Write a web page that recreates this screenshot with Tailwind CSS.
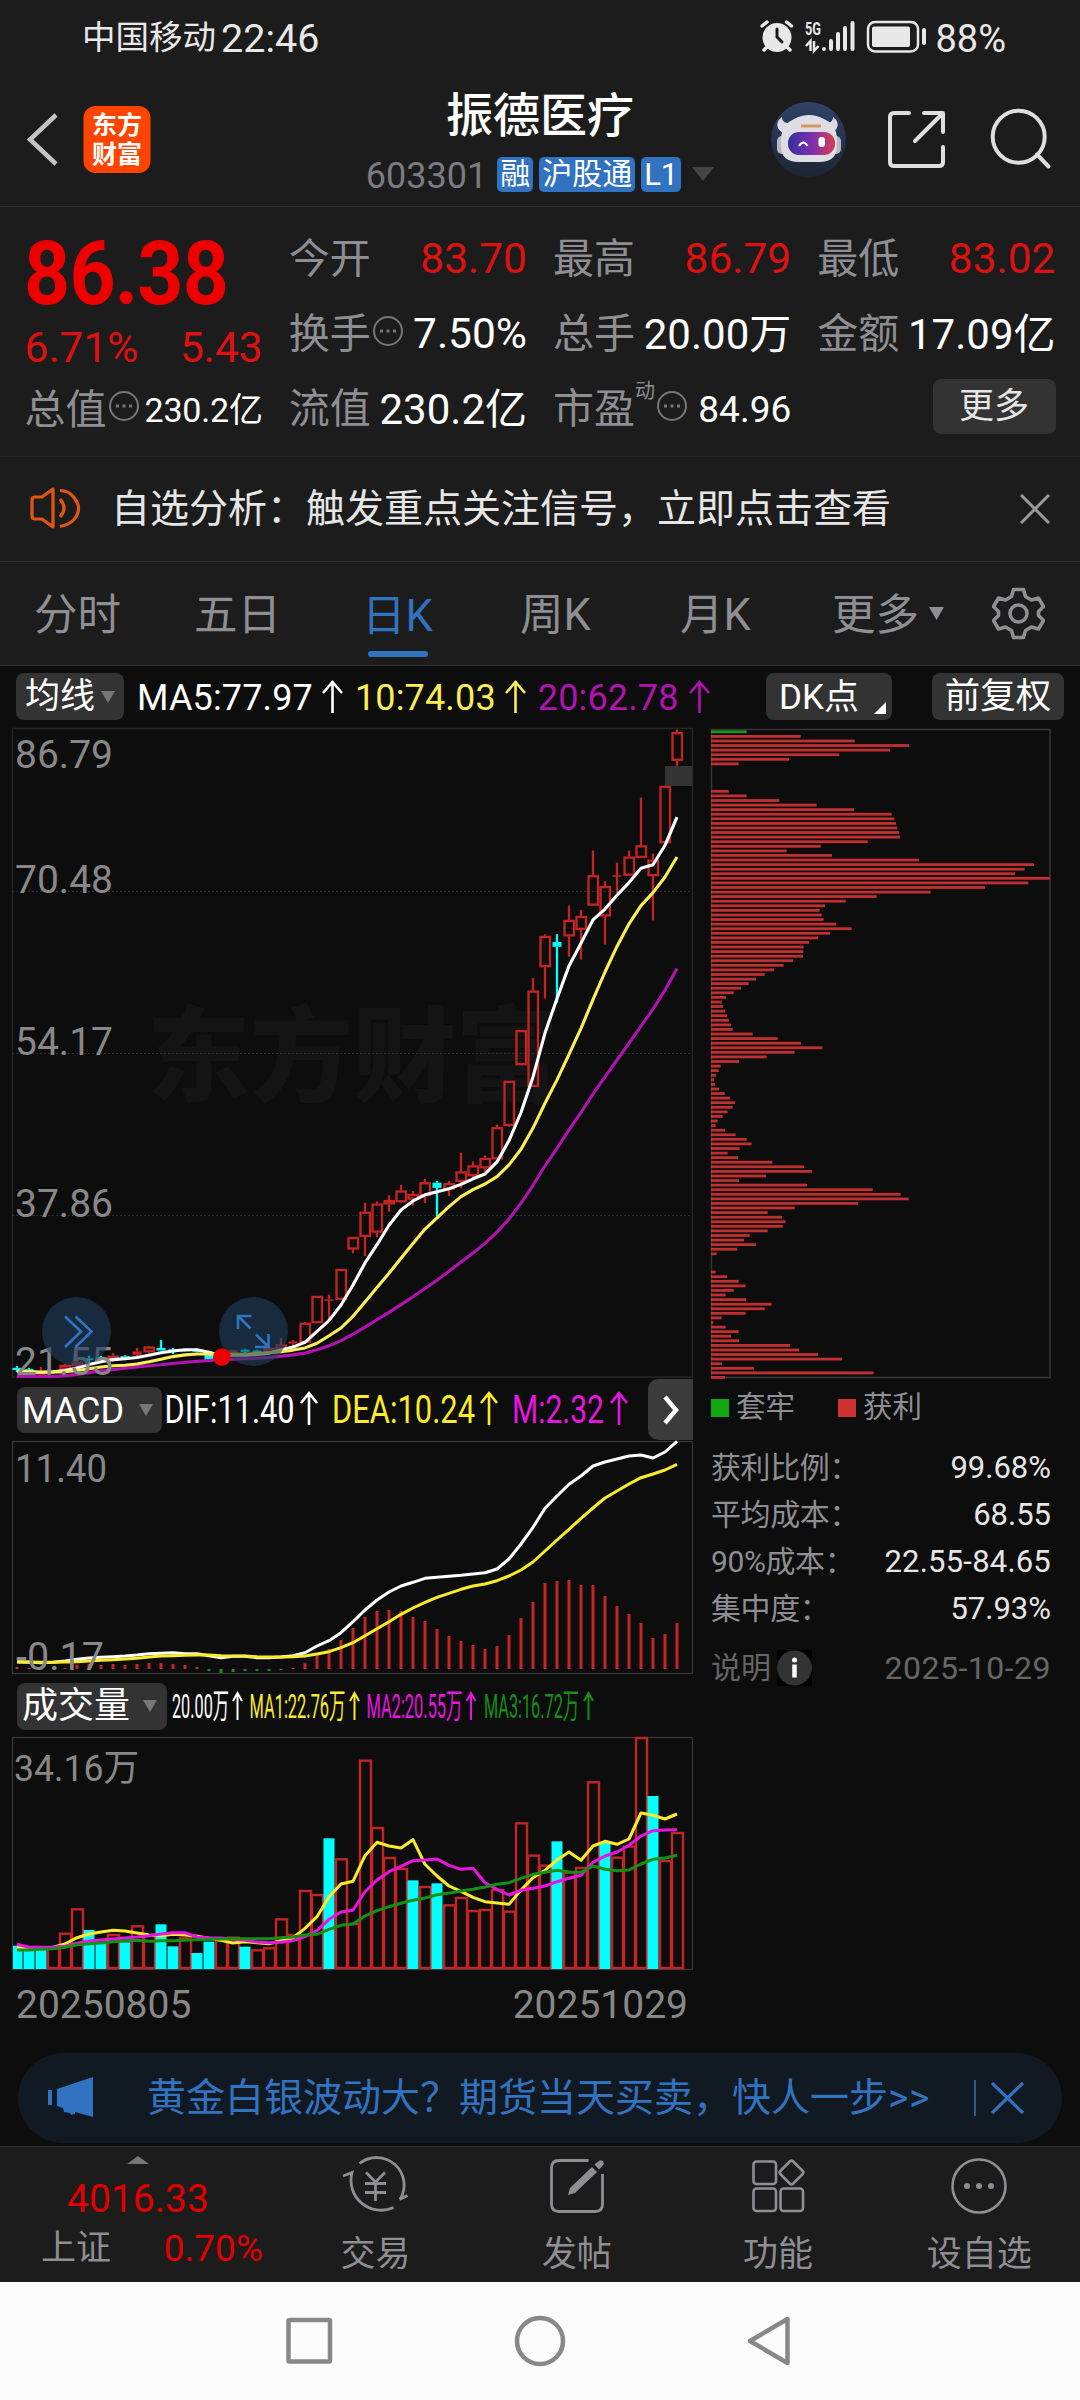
<!DOCTYPE html>
<html lang="zh-CN">
<head>
    <meta charset="UTF-8">
    <meta name="viewport" content="width=device-width, initial-scale=1.0">
    <title>振德医疗 603301</title>
    <script src="https://cdn.jsdelivr.net/npm/@tailwindcss/browser@4"></script>
</head>
<body class="w-[1080px] h-[2400px] overflow-hidden flex flex-col bg-[#0d0d0d] text-white font-[Roboto,'Noto_Sans_CJK_SC',sans-serif] whitespace-nowrap">

    <!-- Status bar -->
    <div class="h-[76px] shrink-0 bg-[#1c1c1c] flex items-center pl-[82px] pr-[74px] text-[#e8e8e8]">
        <span class="text-[33.5px] leading-none">中国移动</span>
        <span class="text-[39.5px] leading-none ml-[5px] mt-[2px]">22:46</span>
        <svg class="ml-auto" width="172" height="40" viewBox="759 18 172 40" fill="#e8e8e8">
            <circle cx="777" cy="37.5" r="14.5"/>
            <path d="M762 26l5-4M791.500 26l-5-4M768 46l-4 4M786 46l4 4" stroke="#e8e8e8" stroke-width="3.500" stroke-linecap="round"/>
            <path d="M777 29v8l5 5" stroke="#1c1c1c" stroke-width="3" fill="none" stroke-linecap="round"/>
            <text x="805" y="34.500" font-size="18" font-weight="700" textLength="16" lengthAdjust="spacingAndGlyphs">5G</text>
            <path d="M810.500 51V41l-4.500 5M814 41v10l4.500-5" stroke="#e8e8e8" stroke-width="2.500" fill="none"/>
            <path d="M824 49v0M831 41v8M838 34v15M845 28v21M852.500 23v26" stroke="#e8e8e8" stroke-width="4" stroke-linecap="round"/>
            <rect x="868" y="22" width="50" height="29.500" rx="7" fill="none" stroke="#e8e8e8" stroke-width="2.500"/>
            <rect x="872" y="26.500" width="38" height="20.500" rx="2"/>
            <path d="M924 30v13" stroke="#e8e8e8" stroke-width="4" stroke-linecap="round"/>
        </svg>
        <span class="text-[38px] leading-none ml-[4px] mt-[2px]">88%</span>
    </div>

    <!-- Title bar -->
    <div class="h-[131px] shrink-0 bg-[#1c1c1c] border-b border-[#333] flex">
        <svg class="shrink-0" width="320" height="130" viewBox="0 76 320 130">
            <path d="M56 115L30 139.500L56 164" fill="none" stroke="#c4c4c4" stroke-width="4.500"/>
            <rect x="83.500" y="106" width="67" height="67" rx="12" fill="#ff4400"/>
            <g fill="#fff" font-weight="700" font-size="25">
                <text x="92" y="134" textLength="50">东方</text>
                <text x="92" y="163" textLength="50">财富</text>
            </g>
        </svg>
        <div class="w-[440px] shrink-0 flex flex-col items-center">
            <div class="mt-[14px] h-[52px] text-[47px] leading-[52px] font-medium">振德医疗</div>
            <div class="mt-[14px] h-[36px] flex items-center">
                <span class="text-[36px] leading-[36px] text-[#7b7b80] mr-[10px] pt-[3px]">603301</span>
                <span class="h-[35px] w-[36px] rounded-[5px] bg-[#3173c0] text-[30px] leading-[33px] text-center mr-[6px]">融</span>
                <span class="h-[35px] w-[96px] rounded-[5px] bg-[#3173c0] text-[30px] leading-[33px] text-center mr-[6px]">沪股通</span>
                <span class="h-[35px] w-[40px] rounded-[5px] bg-[#3173c0] text-[31px] leading-[36px] text-center mr-[11px]">L1</span>
                <svg width="22" height="14"><path d="M0 0h22l-11 14z" fill="#444"/></svg>
            </div>
        </div>
        <svg class="shrink-0" width="320" height="130" viewBox="760 76 320 130">
            <defs>
                <linearGradient id="avatar" x1="0" y1="0" x2="0" y2="1"><stop offset="0" stop-color="#2f4268"/><stop offset="1" stop-color="#1d2534"/></linearGradient>
                <linearGradient id="visor"><stop offset="0" stop-color="#36309a"/><stop offset=".5" stop-color="#7a30b0"/><stop offset="1" stop-color="#d83c50"/></linearGradient>
            </defs>
            <circle cx="808.500" cy="139.500" r="37.500" fill="url(#avatar)"/>
            <path d="M782 117c-6 4-7 11 1 16l9-10c-7 1-10-2-10-6zM833 117c6 4 7 11-1 16l-9-10c7 1 10-2 10-6z" fill="#dcdce4"/>
            <rect x="777" y="136" width="10" height="18" rx="5" fill="#b9b9c6"/>
            <rect x="831" y="136" width="10" height="18" rx="5" fill="#b9b9c6"/>
            <path d="M794 119q15-8 30 0q12 5 13 19v8q0 16-18 16h-20q-18 0-18-16v-8q1-14 13-19z" fill="#dedde4"/>
            <path d="M801 126h20" stroke="#d7975f" stroke-width="3"/>
            <rect x="788" y="132" width="47" height="23" rx="11" fill="url(#visor)"/>
            <path d="M799 146q4.500-7 8.500 0" fill="none" stroke="#fff" stroke-width="2"/>
            <rect x="818.500" y="137" width="6.500" height="10" rx="3" fill="#fff"/>
            <g fill="none" stroke="#dedede" stroke-width="4" stroke-linecap="round" stroke-linejoin="round">
                <path d="M909 113h-15q-4 0-4 4v45q0 4 4 4h45q4 0 4-4v-15"/>
                <path d="M924 113h19v19M942 114L915 141"/>
                <circle cx="1018.700" cy="136.700" r="26"/>
                <path d="M1037 154.500l11.500 12"/>
            </g>
        </svg>
    </div>

    <!-- Quote summary -->
    <div class="h-[250px] shrink-0 bg-[#1c1c1c] border-b border-[#2b2b2b] px-[24.5px] grid grid-cols-4 gap-x-[26px] text-[42.5px] leading-none">
        <div class="flex flex-col">
            <div class="mt-[24px] h-[85px] text-[89px] leading-[85px] font-bold text-[#ee0000] origin-left scale-x-[0.905] tracking-[-0.01em] -ml-[1px]">86.38</div>
            <div class="h-[64px] flex items-center justify-between text-[#dd1111]"><span>6.71%</span><span>5.43</span></div>
            <div class="h-[60px] flex items-center text-[#8e8e93]">
                <span class="text-[41px]">总值</span>
                <svg class="ml-[1px] mb-[8px] shrink-0" width="32" height="32"><circle cx="16" cy="16" r="14" fill="none" stroke="#77777a" stroke-width="2"/><path d="M8 16h3M14.500 16h3M21 16h3" stroke="#77777a" stroke-width="3"/></svg>
                <span class="ml-auto text-[34px] tracking-[-0.2px] text-white">230.2亿</span>
            </div>
        </div>
        <div class="flex flex-col pt-[15px] text-[#8e8e93]">
            <div class="h-[75px] flex items-center justify-between"><span class="text-[41px]">今开</span><span class="text-[#dd1111]">83.70</span></div>
            <div class="h-[75px] flex items-center">
                <span class="text-[41px]">换手</span>
                <svg class="ml-[1px] mb-[8px] shrink-0" width="32" height="32"><circle cx="16" cy="16" r="14" fill="none" stroke="#77777a" stroke-width="2"/><path d="M8 16h3M14.500 16h3M21 16h3" stroke="#77777a" stroke-width="3"/></svg>
                <span class="ml-auto text-white">7.50%</span>
            </div>
            <div class="h-[75px] flex items-center justify-between"><span class="text-[41px]">流值</span><span class="text-[42px] text-white">230.2亿</span></div>
        </div>
        <div class="flex flex-col pt-[15px] text-[#8e8e93]">
            <div class="h-[75px] flex items-center justify-between"><span class="text-[41px]">最高</span><span class="text-[#dd1111]">86.79</span></div>
            <div class="h-[75px] flex items-center justify-between"><span class="text-[41px]">总手</span><span class="text-[42px] text-white">20.00万</span></div>
            <div class="h-[75px] flex items-center">
                <span class="text-[41px]">市盈</span>
                <span class="text-[20px] mb-[38px]">动</span>
                <svg class="ml-[1px] mb-[8px] shrink-0" width="32" height="32"><circle cx="16" cy="16" r="14" fill="none" stroke="#77777a" stroke-width="2"/><path d="M8 16h3M14.500 16h3M21 16h3" stroke="#77777a" stroke-width="3"/></svg>
                <span class="ml-auto text-[37px] text-white">84.96</span>
            </div>
        </div>
        <div class="flex flex-col pt-[15px] text-[#8e8e93]">
            <div class="h-[75px] flex items-center justify-between"><span class="text-[41px]">最低</span><span class="text-[#dd1111]">83.02</span></div>
            <div class="h-[75px] flex items-center justify-between"><span class="text-[41px]">金额</span><span class="text-[42px] text-white">17.09亿</span></div>
            <div class="h-[68px] flex items-center justify-end"><span class="w-[123px] h-[55px] rounded-lg bg-[#333] text-[#e6e6e6] text-[35px] leading-[55px] text-center">更多</span></div>
        </div>
    </div>

    <!-- Notice -->
    <div class="h-[105px] shrink-0 bg-[#1c1c1c] border-b border-[#333] flex items-center pl-[30px] pr-[30px]">
        <svg width="52" height="46" viewBox="30 486 52 46" fill="none" stroke="#e2570f" stroke-width="3.200" stroke-linejoin="round">
            <path d="M53 489v38l-11-8h-7q-3 0-3-3v-16q0-3 3-3h7z"/>
            <path d="M60 499q8 9 0 18M60 490.500q9 0 14 7t4.500 11q0 6-4.500 11t-14 7"/>
        </svg>
        <span class="ml-[29px] text-[39px] leading-none text-[#e6e6e6]">自选分析：触发重点关注信号，立即点击查看</span>
        <svg class="ml-auto" width="30" height="30" stroke="#999" stroke-width="3"><path d="M1 1l28 28M29 1L1 29"/></svg>
    </div>

    <!-- Period tabs -->
    <div class="h-[104px] shrink-0 bg-[#1c1c1c] border-b border-[#333] flex items-center pl-[34px] text-[43.5px] leading-none text-[#8e8e93]">
        <div class="w-[160px] pt-[5px]">分时</div>
        <div class="w-[168px] pt-[5px]">五日</div>
        <div class="w-[158px] h-full flex flex-col text-[#3173c0]">
            <span class="mt-[33px] h-[43px]">日K</span>
            <span class="mt-[13px] ml-[6px] w-[60px] h-[6px] rounded-full bg-[#3173c0]"></span>
        </div>
        <div class="w-[160px] pt-[5px]">周K</div>
        <div class="w-[152px] pt-[5px]">月K</div>
        <div class="pt-[5px]">更多</div>
        <svg class="ml-[10px]" width="16" height="14"><path d="M0 0h15l-7.500 13z" fill="#8e8e93"/></svg>
        <svg class="ml-auto mr-[35px]" width="53" height="53" viewBox="-26.500 -26.500 53 53" fill="none" stroke="#8e8e93" stroke-width="3.600" stroke-linejoin="round">
            <path d="M-5 -24h10l2 7l6 3.500l7-2l5 8.500l-5 5v4l5 5l-5 8.500l-7-2l-6 3.500l-2 7h-10l-2-7l-6-3.500l-7 2l-5-8.500l5-5v-4l-5-5l5-8.500l7 2l6-3.500z"/>
            <circle r="8.500"/>
        </svg>
    </div>

    <!-- Moving average toolbar -->
    <div class="h-[58px] shrink-0 flex items-center pl-4 pr-4 pt-[3px] text-[36px] leading-none">
        <div class="w-[108px] h-[47px] rounded-lg bg-[#333] flex items-center pl-[9px] text-[35px]">均线<svg class="ml-[6px]" width="14" height="12"><path d="M0 0h14l-7 12z" fill="#777"/></svg></div>
        <span class="ml-[13px] pt-[3px] tracking-[0.15px]">MA5:77.97</span>
        <svg class="ml-[9px]" width="21" height="33" fill="none" stroke="#fff" stroke-width="2.600"><path d="M10.500 33V2M1 13l9.500-11L20 13"/></svg>
        <span class="ml-[12px] pt-[3px] tracking-[0.15px] text-[#fdee55]">10:74.03</span>
        <svg class="ml-[9px]" width="21" height="33" fill="none" stroke="#fdee55" stroke-width="2.600"><path d="M10.500 33V2M1 13l9.500-11L20 13"/></svg>
        <span class="ml-[12px] pt-[3px] tracking-[0.15px] text-[#b112b1]">20:62.78</span>
        <svg class="ml-[10px]" width="21" height="33" fill="none" stroke="#b112b1" stroke-width="2.600"><path d="M10.500 33V2M1 13l9.500-11L20 13"/></svg>
        <div class="ml-auto w-[126px] h-[47px] rounded-lg bg-[#333] flex items-center pl-[13px] text-[35px] mr-[40px]"><span class="pt-[2px]">DK点</span><svg class="ml-auto mr-[6px] mt-[22px]" width="12" height="12"><path d="M12 0v12H0z" fill="#fff"/></svg></div>
        <div class="w-[132px] h-[47px] rounded-lg bg-[#333] text-[35.500px] leading-[47px] text-center">前复权</div>
    </div>

    <div class="h-[1316px] shrink-0 flex">
        <!-- Left: price, MACD, volume -->
        <div class="w-[700px] shrink-0 flex flex-col">
            <svg id="price" class="block shrink-0" width="700" height="655" viewBox="0 724 700 655"></svg>

            <div class="h-[61px] shrink-0 flex items-center pl-[17px] pr-[7px]">
                <div class="w-[145px] h-[46px] rounded-lg bg-[#333] flex items-center pl-[5px] text-[36px] leading-none"><span class="pt-[2px]">MACD</span><svg class="ml-auto mr-[9px]" width="14" height="12"><path d="M0 0h14l-7 12z" fill="#777"/></svg></div>
                <svg width="486" height="61" viewBox="162 1379 486 61" font-size="39" fill="none" stroke-width="2.600">
                    <text x="164.500" y="1423" textLength="130" lengthAdjust="spacingAndGlyphs" fill="#fff">DIF:11.40</text>
                    <path d="M309 1425v-32M301 1403l8-10l8 10" stroke="#fff"/>
                    <text x="332" y="1423" textLength="143" lengthAdjust="spacingAndGlyphs" fill="#fbec2b">DEA:10.24</text>
                    <path d="M489 1425v-32M481 1403l8-10l8 10" stroke="#fbec2b"/>
                    <text x="512" y="1423" textLength="92" lengthAdjust="spacingAndGlyphs" fill="#e815e0">M:2.32</text>
                    <path d="M619 1425v-32M611 1403l8-10l8 10" stroke="#e815e0"/>
                </svg>
                <div class="w-[45px] h-[61px] rounded-l-[10px] bg-[#3b3b3b] flex items-center justify-center">
                    <svg width="18" height="30" fill="none" stroke="#fff" stroke-width="4.500"><path d="M3 2l11 13L3 28"/></svg>
                </div>
            </div>

            <svg id="macd" class="block shrink-0" width="700" height="236" viewBox="0 1440 700 236"></svg>

            <div class="h-[60px] shrink-0 flex items-center pl-[17px]">
                <div class="w-[150px] h-[47px] rounded-lg bg-[#333] flex items-center pl-[5px] text-[36px] leading-none">成交量<svg class="ml-auto mr-[10px]" width="14" height="12"><path d="M0 0h14l-7 12z" fill="#777"/></svg></div>
                <svg width="440" height="60" viewBox="167 1676 440 60" font-size="34" fill="none" stroke-width="2">
                    <text x="172" y="1718" textLength="57" lengthAdjust="spacingAndGlyphs" fill="#fff">20.00万</text>
                    <path d="M237.500 1720v-27M233 1701l4.500-8l4.500 8" stroke="#fff"/>
                    <text x="249.500" y="1718" textLength="96" lengthAdjust="spacingAndGlyphs" fill="#fbec2b">MA1:22.76万</text>
                    <path d="M354.500 1720v-27M350 1701l4.500-8l4.500 8" stroke="#fbec2b"/>
                    <text x="366.500" y="1718" textLength="96" lengthAdjust="spacingAndGlyphs" fill="#e815e0">MA2:20.55万</text>
                    <path d="M471 1720v-27M466.500 1701l4.500-8l4.500 8" stroke="#e815e0"/>
                    <text x="484" y="1718" textLength="95" lengthAdjust="spacingAndGlyphs" fill="#159015">MA3:16.72万</text>
                    <path d="M588.500 1720v-27M584 1701l4.500-8l4.500 8" stroke="#159015"/>
                </svg>
            </div>

            <svg id="volume" class="block shrink-0" width="700" height="236" viewBox="0 1736 700 236"></svg>

            <div class="h-[64px] flex items-center justify-between pl-[16px] pr-[12px] pt-[3px] text-[39px] leading-none text-[#888]">
                <span>20250805</span>
                <span>20251029</span>
            </div>
        </div>

        <!-- Right: cost distribution -->
        <div class="w-[351px] flex flex-col pl-[11px] text-[30px] leading-none text-[#8e8e93]">
            <svg id="chips" class="block shrink-0 -ml-[11px]" width="360" height="655" viewBox="700 724 360 655"></svg>
            <div class="mt-[9px] h-[40px] flex items-center text-[29.500px]">
                <span class="w-[18px] h-[18px] bg-[#12a812] mr-[7px]"></span>套牢
                <span class="w-[18px] h-[18px] bg-[#cf3232] ml-[43px] mr-[7px]"></span>获利
            </div>
            <div class="mt-[16px] flex flex-col">
                <div class="h-[47px] flex items-center justify-between"><span class="tracking-[-0.4px]">获利比例：</span><span class="text-[31px] text-[#e6e6e6]">99.68%</span></div>
                <div class="h-[47px] flex items-center justify-between"><span class="tracking-[-0.4px]">平均成本：</span><span class="text-[31px] text-[#e6e6e6]">68.55</span></div>
                <div class="h-[47px] flex items-center justify-between"><span class="tracking-[-0.4px]">90%成本：</span><span class="text-[31px] tracking-[0.2px] text-[#e6e6e6]">22.55-84.65</span></div>
                <div class="h-[47px] flex items-center justify-between"><span class="tracking-[-0.4px]">集中度：</span><span class="text-[31px] text-[#e6e6e6]">57.93%</span></div>
            </div>
            <div class="mt-[12px] h-[47px] flex items-center text-[#666]">
                <span>说明</span>
                <svg class="ml-[6px] bg-black" width="35" height="36"><circle cx="17.500" cy="18" r="17.500" fill="#333"/><circle cx="17.500" cy="10" r="2.500" fill="#fff"/><path d="M17.500 14.500v13" stroke="#fff" stroke-width="4.500"/></svg>
                <span class="ml-auto text-[32px] tracking-[0.5px] pt-[1px]">2025-10-29</span>
            </div>
        </div>
    </div>

    <!-- Promo banner -->
    <div class="h-[106px] shrink-0 pt-[13px] px-[18px]">
        <div class="h-[90px] rounded-full bg-[#111a23] flex items-center pl-[29px] pr-[38px] text-[#3173c0]">
            <svg width="48" height="42" viewBox="47 2077 48 42" fill="#3173c0"><path d="M48 2090h4v15h-4zM57 2089l36-12v40l-18-5v2l-4 1l-1-2l-6-1l-1-4l-6-2z"/></svg>
            <span class="ml-[52px] text-[39px] leading-none">黄金白银波动大？期货当天买卖，快人一步<span class="tracking-[0.5px]">&gt;&gt;</span></span>
            <span class="ml-auto w-[2px] h-[36px] bg-[#2a5a92] mr-[15px]"></span>
            <svg width="33" height="32" stroke="#3173c0" stroke-width="3.200"><path d="M1 1l31 30M32 1L1 31"/></svg>
        </div>
    </div>

    <!-- Bottom bar -->
    <div class="h-[136px] shrink-0 bg-[#1c1c1c] border-t border-[#333] grid grid-cols-[275px_1fr_1fr_1fr_1fr] text-[35px] leading-none text-[#8e8e93]">
        <div class="flex flex-col items-center">
            <svg class="mt-[9px]" width="22" height="8"><path d="M0 8h22L11 0z" fill="#77777a"/></svg>
            <span class="mt-[16px] ml-[1px] h-[39px] text-[39px] text-[#e00000]">4016.33</span>
            <div class="mt-[11px] ml-[29px] w-[222px] flex items-center justify-between"><span>上证</span><span class="text-[37px] text-[#e00000]">0.70%</span></div>
        </div>
        <div class="flex flex-col items-center pt-[7px]">
            <svg width="70" height="64" viewBox="341 2154 70 64" fill="none" stroke="#8e8e93" stroke-width="2.800">
                <path d="M359.500 2163.500A27.500 27.500 0 0 1 400 2199.500M343 2176l9-3.500A30 30 0 0 0 393.500 2207.500M407.500 2195.500l-8 4"/>
                <path d="M366 2172.500l9.500 9.500l9.500-9.500M365 2183.500h21M365 2192.500h21M375.500 2182v19"/>
            </svg>
            <span class="mt-[19px]">交易</span>
        </div>
        <div class="flex flex-col items-center pt-[7px]">
            <svg width="64" height="64" viewBox="545 2154 64 64" fill="none" stroke="#8e8e93" stroke-width="2.800">
                <path d="M588.500 2160.500H559q-7.500 0-7.500 7.500v36q0 7.500 7.500 7.500h36q7.500 0 7.500-7.500v-30"/>
                <path d="M592 2167l5 5L575 2193l-7 2l2-7z" fill="#8e8e93" stroke="none"/>
                <path d="M594.500 2164.500l5-4q3-1 4 1.500t-1 4l-3.500 3.500z" fill="#8e8e93" stroke="none"/>
            </svg>
            <span class="mt-[19px]">发帖</span>
        </div>
        <div class="flex flex-col items-center pt-[7px]">
            <svg width="64" height="64" viewBox="746 2154 64 64" fill="none" stroke="#8e8e93" stroke-width="2.600">
                <rect x="753.500" y="2161.500" width="22.500" height="22.500" rx="3"/>
                <rect x="753.500" y="2188.500" width="22.500" height="22.500" rx="3"/>
                <rect x="780.500" y="2188.500" width="22.500" height="22.500" rx="3"/>
                <rect x="782.500" y="2163.500" width="18" height="18" rx="2.500" transform="rotate(45 791.500 2172.500)"/>
            </svg>
            <span class="mt-[19px]">功能</span>
        </div>
        <div class="flex flex-col items-center pt-[7px]">
            <svg width="64" height="64" viewBox="-32 -32 64 64" fill="none" stroke="#8e8e93" stroke-width="2.600">
                <circle r="26.500"/>
                <g fill="#8e8e93" stroke="none"><circle cx="-12" r="3"/><circle r="3"/><circle cx="12" r="3"/></g>
            </svg>
            <span class="mt-[19px]">设自选</span>
        </div>
    </div>

    <!-- System navigation -->
    <div class="h-[118px] shrink-0 bg-[#fcfcfc] flex justify-center">
        <svg width="1080" height="118" viewBox="0 2282 1080 118" fill="none" stroke="#888" stroke-width="4.500" stroke-linejoin="round">
            <rect x="288.500" y="2320" width="41.500" height="41.500" rx="1"/>
            <circle cx="540" cy="2341" r="23"/>
            <path d="M750 2341L787.500 2319V2363z"/>
        </svg>
    </div>

    <script>
        const RED = '#c42424';
        const CYAN = '#00ffff';
        const STEP = 12;
        const xAt = i => 17 + STEP * i;

        // chart rows are stored in sampled units and converted with an offset and a scale
        const priceY = v => 720 + v / 2.306;
        const macdY = v => 1370 + v / 3;
        const volY = v => 1670 + v / 3;

        const rect = (x, y, w, h, attrs) => `<rect x="${x}" y="${y}" width="${w}" height="${h}" ${attrs}/>`;
        const line = (x1, y1, x2, y2, attrs) => `<line x1="${x1}" y1="${y1}" x2="${x2}" y2="${y2}" ${attrs}/>`;
        const label = (x, y, w, text) => `<text x="${x}" y="${y}" textLength="${w}" lengthAdjust="spacingAndGlyphs" font-size="38" fill="#888">${text}</text>`;

        function polyline(values, toY, color, width) {
            const points = values.map((v, i) => `${xAt(i)},${toY(v).toFixed(1)}`).join(' ');
            return `<polyline points="${points}" fill="none" stroke="${color}" stroke-width="${width}" stroke-linejoin="round"/>`;
        }

        // [high, bodyTop, bodyBottom, low, isDown]
        const candles = [
            [1490,1494,1499,1504,1],[1494,1497,1501,1506,1],[1492,1504,1510,1510],[1500,1501,1506,1507],[1485,1487,1498,1500],
            [1455,1480,1490,1495],[1466,1472,1476,1488,1],[1466,1469,1473,1476,1],[1460,1466,1475,1480],[1465,1467,1473,1474,1],
            [1448,1456,1464,1470],[1443,1445,1458,1462],[1430,1448,1454,1454,1],[1448,1451,1456,1462,1],[1451,1452,1456,1457,1],
            [1450,1452,1457,1458,1],[1460,1463,1475,1476,1],[1462,1463,1473,1474],[1452,1453,1460,1462],[1450,1452,1457,1462,1],
            [1452,1454,1460,1462,1],[1446,1448,1458,1462],[1425,1440,1452,1458],[1430,1433,1438,1444],[1388,1390,1436,1436],
            [1328,1328,1391,1391],[1325,1336,1338,1385],[1266,1266,1337,1337],[1192,1192,1221,1230],[1113,1134,1192,1236],
            [1110,1115,1182,1193],[1096,1107,1117,1134],[1072,1085,1112,1114],[1086,1093,1106,1120],[1058,1066,1098,1114],
            [1063,1067,1079,1145,1],[1063,1068,1083,1098],[998,1041,1065,1080],[1018,1027,1052,1055],[1004,1010,1034,1042],
            [933,939,1013,1013],[832,832,936,938],[715,715,796,796],[595,624,846,846],[494,498,570,642],
            [494,512,523,652,1],[428,461,499,546],[438,452,484,552],[301,358,428,428],[372,383,453,518],
            [329,358,360,400],[301,315,359,360],[179,289,318,318],[308,322,360,462],[152,152,284,284],[22,28,94,106]
        ];
        const ma5 = [1502,1503,1504,1503,1500,1494,1486,1480,1475,1473,1470,1465,1459,1455,1452,1452,1458,1466,1465,1465,1463,1460,1453,1446,1435,1410,1385,1349,1303,1252,1210,1165,1130,1109,1095,1088,1081,1071,1058,1047,1019,970,905,823,722,642,567,515,461,436,404,375,342,334,289,224];
        const ma10 = [1502,1503,1504,1504,1503,1500,1496,1492,1489,1488,1485,1480,1474,1468,1464,1462,1462,1463,1463,1463,1461,1459,1457,1453,1448,1437,1420,1402,1375,1342,1309,1276,1241,1207,1174,1148,1122,1099,1083,1070,1053,1026,990,941,884,830,771,711,645,581,522,470,428,398,362,316];
        const ma20 = [1514,1514,1514,1514,1512,1509,1505,1501,1498,1495,1492,1489,1487,1484,1481,1479,1477,1475,1474,1473,1472,1470,1467,1464,1460,1452,1443,1431,1416,1400,1383,1366,1348,1330,1311,1292,1271,1250,1229,1207,1181,1151,1114,1073,1028,988,945,905,862,823,784,745,706,667,623,573];

        const dif = [876,877,878,877,873,868,864,862,860,858,855,851,850,848,851,851,857,863,859,859,863,863,861,857,848,828,812,788,755,720,690,666,648,637,625,622,619,616,612,608,597,567,522,472,415,378,343,318,288,276,267,258,255,264,246,214];
        const dea = [875,876,877,877,876,875,873,871,869,867,865,861,858,857,856,855,855,857,858,858,860,861,861,860,858,852,845,833,818,797,776,755,733,714,697,682,670,658,648,642,632,618,600,576,543,510,478,445,414,384,363,342,323,312,300,283];
        const hist = [891,894,896,896,894,884,881,885,882,885,882,879,879,882,885,891,903,909,906,903,903,903,900,894,879,848,837,810,774,741,723,720,723,741,753,777,798,813,825,837,828,795,744,696,639,633,630,645,645,678,708,732,759,804,792,759];

        const volume = [827,840,838,832,791,718,780,820,795,817,769,798,763,829,805,849,815,812,803,830,841,835,748,795,663,675,505,568,762,272,474,564,597,631,651,640,706,684,723,720,660,725,460,557,587,514,608,594,337,517,563,530,204,378,573,489];
        const volumeDown = [0,1,2,6,7,9,12,13,15,16,19,26,33,35,45,49,53];
        const vol1 = [832,834,836,832,822,803,792,786,781,783,789,795,797,793,795,799,805,811,819,815,818,821,812,804,775,740,680,642,634,557,517,528,534,509,583,618,648,664,682,695,699,703,660,623,601,570,546,571,528,514,523,507,429,436,447,432];
        const vol2 = [823,832,832,831,829,820,813,810,807,804,801,797,792,788,788,801,803,804,808,811,816,818,817,812,800,782,748,726,721,665,630,605,589,572,570,567,586,598,595,638,658,675,661,655,648,635,625,616,577,558,546,526,498,482,480,479];
        const vol3 = [840,840,838,836,832,824,821,819,815,812,811,814,812,812,811,809,808,807,806,806,806,806,803,801,795,793,778,766,762,738,722,710,700,691,684,674,669,663,658,651,643,638,625,613,607,601,606,607,588,598,602,600,582,568,564,556];

        const chips = [140,302,464,627,570,418,267,116,0,0,0,0,0,86,140,238,350,462,575,583,588,592,597,600,503,362,260,396,657,1002,974,945,1050,985,855,692,530,437,375,359,365,371,408,455,390,354,327,311,310,309,279,251,222,194,168,146,123,101,78,65,69,75,81,87,93,98,158,233,303,367,284,200,117,62,56,49,42,45,57,74,90,105,98,83,68,53,47,75,107,140,155,119,83,114,217,312,336,198,117,321,518,602,626,474,284,203,246,257,248,203,149,132,168,112,50,0,0,0,47,81,116,137,101,77,138,215,194,137,65,40,77,116,93,117,270,297,354,426,66,162,521,75];

        function drawPrice() {
            let s = rect(12.5, 728.5, 680, 648.5, 'fill="none" stroke="#262626" stroke-width="1.5"');
            s += '<text x="147" y="1094" font-size="104" font-weight="900" textLength="412" lengthAdjust="spacingAndGlyphs" fill="#141414">东方财富</text>';
            [891.5, 1053.5, 1215.5].forEach(y => {
                s += line(12, y, 692, y, 'stroke="#2e2e2e" stroke-dasharray="2 2"');
            });
            s += rect(665, 766, 27, 20, 'fill="#333"');
            candles.forEach(([hi, top, bottom, lo, down], i) => {
                const x = xAt(i), color = down ? CYAN : RED;
                const y1 = priceY(top), y2 = priceY(bottom);
                s += line(x, priceY(hi), x, y1, `stroke="${color}" stroke-width="2.3"`);
                s += line(x, y2, x, priceY(lo), `stroke="${color}" stroke-width="2.3"`);
                s += y2 - y1 < 3.5 || down
                    ? rect(x - 4.5, y1, 9, Math.max(y2 - y1, 1.5), `fill="${color}"`)
                    : rect(x - 4.5, y1 + 1, 9.5, y2 - y1 - 2, `fill="none" stroke="${color}" stroke-width="2.3"`);
            });
            s += polyline(ma20, priceY, '#b112b1', 3.1);
            s += polyline(ma5, priceY, '#ffffff', 3.1);
            s += polyline(ma10, priceY, '#fdee55', 3.1);
            s += label(15, 768, 98, '86.79') + label(15, 892.5, 98, '70.48') + label(15, 1054.5, 98, '54.17') + label(15, 1217, 98, '37.86') + label(15, 1374.5, 98, '21.55');
            s += '<g fill="#20405f" fill-opacity=".6"><circle cx="76.5" cy="1331.5" r="34.5"/><circle cx="253.5" cy="1331.5" r="34.5"/></g>';
            s += '<g fill="none" stroke="#3173c0" stroke-width="2.6">';
            s += '<path d="M65 1316.500l16 15l-16 15.500M75.500 1316.500l16 15l-16 15.500"/>';
            s += '<path d="M238 1329v-13h13.500M238.500 1316.500l12 12M268.500 1334v13H255M268 1346.500l-12-12"/></g>';
            s += '<circle cx="222" cy="1357" r="8.8" fill="#ee0000"/>';
            document.getElementById('price').innerHTML = s;
        }

        function drawMacd() {
            let s = rect(12.5, 1441.5, 680, 232, 'fill="none" stroke="#3a3a3a" stroke-width="1.2"');
            hist.forEach((v, i) => {
                const y = macdY(v), base = 1669;
                s += rect(xAt(i) - 1.5, Math.min(y, base), 3, Math.abs(y - base), `fill="${v > 897 ? '#1f8f1f' : RED}"`);
            });
            s += polyline(dif, macdY, '#ffffff', 3);
            s += polyline(dea, macdY, '#fbec2b', 3);
            s += label(15, 1481.5, 92, '11.40') + label(16, 1670, 88, '-0.17');
            document.getElementById('macd').innerHTML = s;
        }

        function drawVolume() {
            let s = rect(12.5, 1737.5, 680, 232, 'fill="none" stroke="#3a3a3a" stroke-width="1.2"');
            volume.forEach((v, i) => {
                const x = xAt(i), y = volY(v), base = 1969;
                s += volumeDown.includes(i)
                    ? rect(Math.max(x - 5.5, 13), y, x - 5.5 < 13 ? 9.5 : 11, base - y, `fill="${CYAN}"`)
                    : rect(x - 5, y, 11, base - 1 - y, `fill="none" stroke="${RED}" stroke-width="2.4"`);
            });
            s += polyline(vol1, volY, '#fbec2b', 3);
            s += polyline(vol2, volY, '#e815e0', 3);
            s += polyline(vol3, volY, '#159015', 3);
            s += '<text x="14" y="1781" font-size="37" textLength="125" lengthAdjust="spacingAndGlyphs" fill="#888">34.16万</text>';
            document.getElementById('volume').innerHTML = s;
        }

        function drawChips() {
            let s = rect(711.5, 729.5, 338.5, 648, 'fill="none" stroke="#363636" stroke-width="1.5"');
            chips.forEach((v, i) => {
                if (!v) return;
                s += rect(711, (730.4 + i * 4.579).toFixed(1), ((v - 33) / 3).toFixed(1), 2.8, `fill="${i === 0 ? '#1a9a1a' : '#c03030'}"`);
            });
            document.getElementById('chips').innerHTML = s;
        }

        drawPrice();
        drawMacd();
        drawVolume();
        drawChips();
    </script>
</body>
</html>
